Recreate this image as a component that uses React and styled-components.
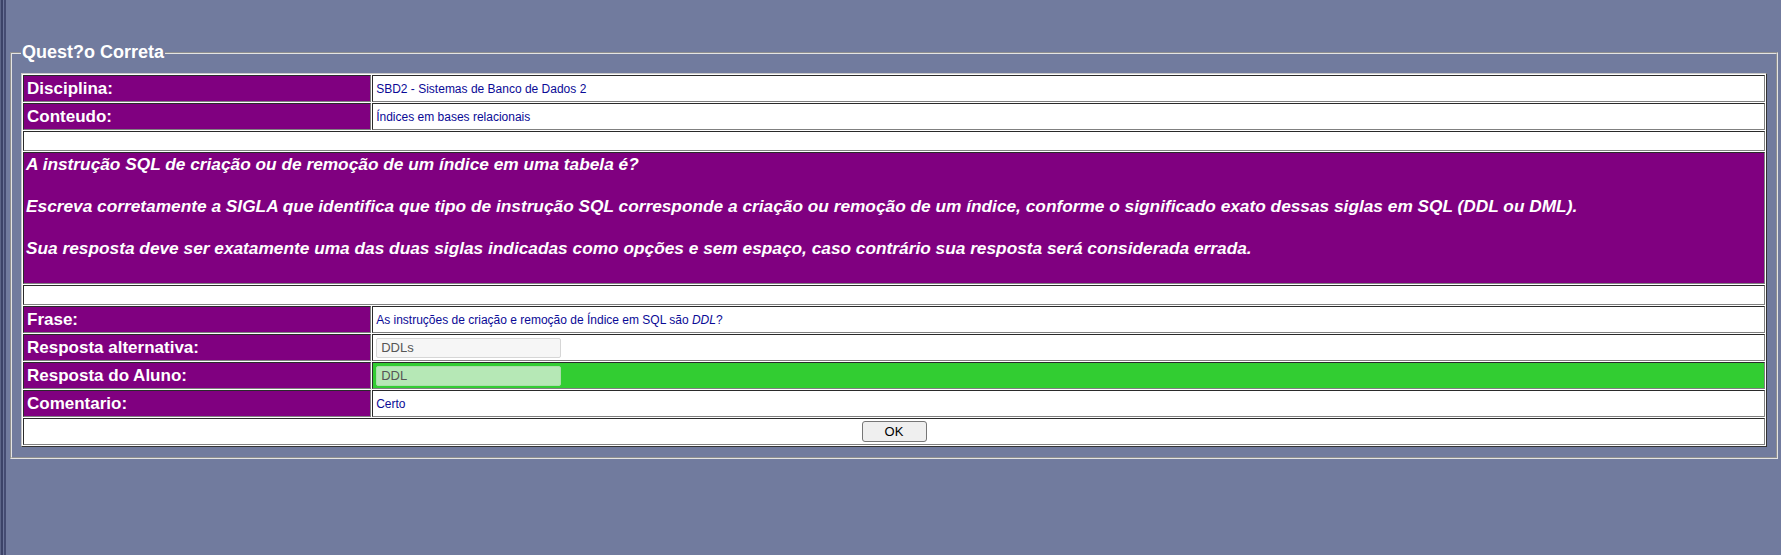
import React from "react";
import styled, { createGlobalStyle } from "styled-components";

const GlobalStyle = createGlobalStyle`
  html, body {
    margin: 0;
    padding: 0;
    background: #717b9e;
  }
`;

const Page = styled.div`
  display: flex;
  min-height: 555px;
  font-family: "Liberation Sans", Arial, sans-serif;
`;

const Strip = styled.div`
  width: 6px;
  flex: none;
  background: linear-gradient(
    to right,
    #5d6689 0 1px,
    #3c4368 1px 3px,
    #6b7499 3px 4px,
    #454c72 4px 6px
  );
`;

const Main = styled.main`
  flex: 1;
  min-width: 0;
  padding: 42px 3px 0 4px;
`;

const Fieldset = styled.fieldset`
  margin: 0;
  min-width: 0;
  border: 2px groove #e4e4e4;
  padding: 10px 9px 10px 9px;
`;

const Legend = styled.legend`
  padding: 0 1px;
  color: #fff;
  font-weight: bold;
  font-size: 18px;
  line-height: 21px;
`;

const Table = styled.table`
  width: 100%;
  border-collapse: separate;
  border-spacing: 1px;
  background: #fff;
  border: 1px solid;
  border-color: #c8c8c8 #333 #333 #c8c8c8;
`;

const Cell = styled.td`
  box-sizing: border-box;
  border: 1px solid;
  border-color: #2a2a2a #808080 #808080 #2a2a2a;
  padding: 0 3px;
  height: ${(p) => p.$h || 27}px;
  vertical-align: middle;
`;

const Label = styled(Cell)`
  width: 20%;
  background: #800080;
  color: #fff;
  font-weight: bold;
  font-size: 17px;
`;

const Value = styled(Cell)`
  background: ${(p) => (p.$ok ? "#32cd32" : "#fff")};
  color: #0a0a96;
  font-size: 12px;
`;

const Question = styled(Cell)`
  background: #800080;
  color: #fff;
  font-weight: bold;
  font-style: italic;
  font-size: 17.3px;
  line-height: 21px;
  padding: 1px 2px;
  vertical-align: top;
`;

const Para = styled.p`
  margin: 0 0 21px;
`;

const Centered = styled(Cell)`
  text-align: center;
  background: #fff;
`;

const Answer = styled.input`
  box-sizing: border-box;
  display: block;
  width: 185px;
  height: 20px;
  border: 1px solid ${(p) => (p.$ok ? "#a9dfa9" : "#d6d6d6")};
  border-radius: 2px;
  background: ${(p) => (p.$ok ? "#b6e8b6" : "#f6f6f6")};
  color: #555;
  font: 13px "Liberation Sans", Arial, sans-serif;
  padding: 0 4px;
  outline: none;
`;

const OkButton = styled.button`
  box-sizing: border-box;
  width: 65px;
  height: 21px;
  background: #efefef;
  border: 1px solid #767676;
  border-radius: 3px;
  color: #000;
  font: 13px "Liberation Sans", Arial, sans-serif;
  padding: 0;
  vertical-align: middle;
`;

export default function App() {
  return (
    <>
      <GlobalStyle />
      <Page>
        <Strip />
        <Main>
          <Fieldset>
            <Legend>Quest?o Correta</Legend>
            <Table>
              <tbody>
                <tr>
                  <Label>Disciplina:</Label>
                  <Value>SBD2 - Sistemas de Banco de Dados 2</Value>
                </tr>
                <tr>
                  <Label>Conteudo:</Label>
                  <Value>Índices em bases relacionais</Value>
                </tr>
                <tr>
                  <Centered colSpan={2} $h={20} />
                </tr>
                <tr>
                  <Question colSpan={2} $h={132}>
                    <Para>A instrução SQL de criação ou de remoção de um índice em uma tabela é?</Para>
                    <Para>
                      Escreva corretamente a SIGLA que identifica que tipo de instrução SQL corresponde a
                      criação ou remoção de um índice, conforme o significado exato dessas siglas em SQL
                      (DDL ou DML).
                    </Para>
                    <Para>
                      Sua resposta deve ser exatamente uma das duas siglas indicadas como opções e sem
                      espaço, caso contrário sua resposta será considerada errada.
                    </Para>
                  </Question>
                </tr>
                <tr>
                  <Centered colSpan={2} $h={20} />
                </tr>
                <tr>
                  <Label>Frase:</Label>
                  <Value>
                    As instruções de criação e remoção de Índice em SQL são <i>DDL</i>?
                  </Value>
                </tr>
                <tr>
                  <Label>Resposta alternativa:</Label>
                  <Value>
                    <Answer readOnly defaultValue="DDLs" />
                  </Value>
                </tr>
                <tr>
                  <Label>Resposta do Aluno:</Label>
                  <Value $ok>
                    <Answer $ok readOnly defaultValue="DDL" />
                  </Value>
                </tr>
                <tr>
                  <Label>Comentario:</Label>
                  <Value>Certo</Value>
                </tr>
                <tr>
                  <Centered colSpan={2}>
                    <OkButton type="button">OK</OkButton>
                  </Centered>
                </tr>
              </tbody>
            </Table>
          </Fieldset>
        </Main>
      </Page>
    </>
  );
}
